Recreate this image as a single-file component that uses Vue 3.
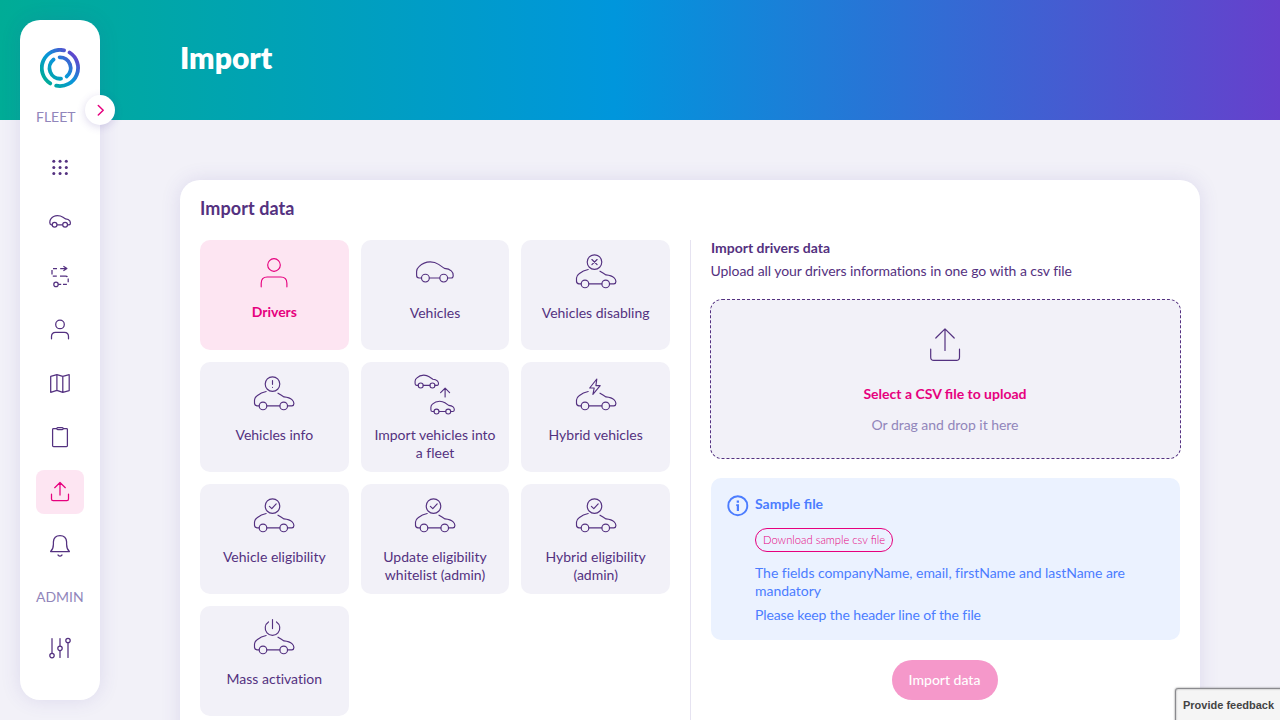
<script setup>
const nav = ['grid', 'car', 'route', 'user', 'map', 'clipboard', 'upload', 'bell']

const tiles = [
  { icon: 'user', label: 'Drivers', active: true },
  { icon: 'car', label: 'Vehicles' },
  { icon: 'disable', label: 'Vehicles disabling' },
  { icon: 'info', label: 'Vehicles info' },
  { icon: 'fleet', label: 'Import vehicles into a fleet' },
  { icon: 'hybrid', label: 'Hybrid vehicles' },
  { icon: 'check', label: 'Vehicle eligibility' },
  { icon: 'check', label: 'Update eligibility whitelist (admin)' },
  { icon: 'check', label: 'Hybrid eligibility (admin)' },
  { icon: 'power', label: 'Mass activation' },
]
</script>

<template>
  <div class="page">
    <svg class="defs" width="0" height="0">
      <symbol id="car" viewBox="0 0 48 48">
        <path d="M10.5 30H8Q5.6 29.8 5.6 27.2V23.4Q5.8 20.6 8 18.6Q12.8 13.9 19.2 13.9Q24 13.9 27.6 16.4L33.4 20.4Q38 20.8 40.3 22.9Q42.2 24.6 42.2 27.4Q42.2 29.9 40.3 30H36.6M18.4 30H28.7" />
        <circle cx="14.4" cy="30.1" r="3.9" /><circle cx="32.7" cy="30.1" r="3.9" />
      </symbol>
    </svg>

    <header class="banner"><h1>Import</h1></header>

    <aside class="sidebar">
      <svg class="logo" width="40" height="40" viewBox="0 0 40 40">
        <defs>
          <linearGradient id="brand" gradientUnits="userSpaceOnUse" x1="5" y1="34" x2="35" y2="6">
            <stop offset="0" stop-color="#00ac96" />
            <stop offset=".5" stop-color="#0896da" />
            <stop offset="1" stop-color="#6640cc" />
          </linearGradient>
        </defs>
        <g fill="none" stroke="url(#brand)" stroke-width="3.8" stroke-linecap="round">
          <path d="M10.2 35.4A18.2 18.2 0 0 1 24 2.3" />
          <path d="M29.6 4.5A18.2 18.2 0 0 1 16.2 37.7" />
          <path d="M13.6 11.6A10.7 10.7 0 0 0 21 30.7" />
          <path d="M19.6 9.3A10.7 10.7 0 0 1 26.6 28.4" />
        </g>
      </svg>
      <button class="toggle">
        <svg width="30" height="30" viewBox="0 0 30 30"><path d="M13.3 10.5L18.2 15.2L13.3 20" /></svg>
      </button>
      <span class="label">FLEET</span>
      <nav>
        <a v-for="n in nav" :key="n" class="item" :class="{ active: n === 'upload' }">
          <svg class="ico" width="24" height="24" viewBox="0 0 24 24">
            <g v-if="n === 'grid'" class="solid">
              <template v-for="y in 3" :key="y">
                <circle v-for="x in 3" :key="x" :cx="5.8 + (x - 1) * 6.25" :cy="5.3 + (y - 1) * 6.15" r="1.5" />
              </template>
            </g>
            <g v-else-if="n === 'car'">
              <path d="M3.8 14.8H3.3Q1.8 14.6 1.8 12.6Q1.8 10.2 2.8 9Q5.2 5.6 9.4 5.6Q12.6 5.6 15 7.2L17.6 8.9Q20.6 9.2 21.8 10.8Q22.6 12.4 22.3 14Q22 14.8 20.5 14.8H19.9M9.3 14.8H14.3" />
              <circle cx="6.6" cy="14.7" r="2.4" /><circle cx="17.1" cy="14.7" r="2.4" />
            </g>
            <g v-else-if="n === 'route'" class="dashes">
              <path d="M5 4.5H9M12.2 4.5H18.8M15.4 2.2L18.9 4.5L15.4 6.8M4 6V10.4M4.8 12.2H8.8M12 12.2H17.6Q19 12.2 19.4 13M20.2 14.6V18.2M18.9 20.4H15M13.2 20.4H10.2" />
              <circle cx="8" cy="20.4" r="2.2" />
            </g>
            <g v-else-if="n === 'user'">
              <circle cx="12" cy="6.4" r="4.3" />
              <path d="M3.5 20.8V18.6Q3.5 14.4 7.6 14.4H16.4Q20.5 14.4 20.5 18.6V20.8" />
            </g>
            <g v-else-if="n === 'map'">
              <path d="M2.7 4.4L8.9 2.6L14.8 4.4L21.2 2.6V18.6L14.8 20.4L8.9 18.4L2.7 20.4ZM8.9 2.6V18.4M14.8 4.4V20.4" />
            </g>
            <g v-else-if="n === 'clipboard'">
              <path d="M8.8 2.6H5.6Q4.6 2.6 4.6 3.4V19.8Q4.6 20.6 5.6 20.6H18.5Q19.4 20.6 19.4 19.8V3.4Q19.4 2.6 18.5 2.6H15.2M9.7 1.5H14.3Q15.2 1.5 15.2 2.5Q15.2 3.5 14.3 3.5H9.7Q8.8 3.5 8.8 2.5Q8.8 1.5 9.7 1.5Z" />
            </g>
            <g v-else-if="n === 'upload'">
              <path d="M12 15V2.8M6.7 7.7L12 2.5L17.3 7.7M3.5 14.2V18.9Q3.5 20.5 5.1 20.5H18.9Q20.5 20.5 20.5 18.9V14.2" />
            </g>
            <g v-else>
              <path d="M2.6 17.5Q5.4 15 5.4 10.2V7.9Q5.8 1.6 12 1.6Q18.2 1.6 18.6 7.9V10.2Q18.6 15 21.4 17.5ZM10 21Q12 23.1 14 21" />
            </g>
          </svg>
        </a>
      </nav>
      <span class="label admin">ADMIN</span>
      <a class="item last">
        <svg class="ico" width="24" height="24" viewBox="0 0 24 24">
          <path d="M4 2.6V17.2M12 2.6V10M12 14.6V21.4M20 6.8V21.4" />
          <circle cx="4" cy="19.6" r="2.2" /><circle cx="12" cy="12.3" r="2.2" /><circle cx="20" cy="4.5" r="2.2" />
        </svg>
      </a>
    </aside>

    <main class="card">
      <h2>Import data</h2>
      <div class="columns">
        <section class="tiles">
          <div v-for="t in tiles" :key="t.label" class="tile" :class="{ active: t.active }">
            <svg class="tico" width="48" height="48" viewBox="0 0 48 48">
              <g v-if="t.icon === 'user'">
                <circle cx="24" cy="17" r="6.3" />
                <path d="M11.2 38.8V35.2Q11.2 29 17.2 29H30.8Q36.9 29 36.9 35.2V38.8" />
              </g>
              <use v-else-if="t.icon === 'car'" href="#car" width="48" height="48" />
              <g v-else-if="t.icon === 'fleet'">
                <g class="mini" transform="translate(.5 -3.8) scale(.64)"><use href="#car" width="48" height="48" /></g>
                <g class="mini" transform="translate(16.3 22.3) scale(.64)"><use href="#car" width="48" height="48" /></g>
                <path d="M34.1 27V18.2M29.6 22.6L34.1 18.1L38.6 22.6" />
              </g>
              <g v-else>
                <path d="M9.1 35.9H7Q4.6 35.6 4.5 33.4V30Q4.7 27.4 7.1 25.7Q11.2 22.4 16.2 21.5M28 23.2Q31 25 34 26.9Q39.6 27.4 42.2 29.8Q43.9 31.4 43.9 33.6Q43.8 35.7 41.9 35.9H37.6M16.9 35.9H29.8" />
                <circle cx="13" cy="35.9" r="3.8" /><circle cx="33.7" cy="35.9" r="3.8" />
                <path v-if="t.icon === 'hybrid'" d="M24.8 9L17.7 18H22.2L20.9 24.4L28.2 15.6H23.9Z" />
                <path v-else-if="t.icon === 'power'" d="M22.5 5.6V14.6M18.5 7.9A7.3 7.3 0 1 0 26.5 7.9" />
                <circle v-else cx="22.5" cy="14.1" r="7.3" />
                <path v-if="t.icon === 'disable'" d="M19.9 11.5L25.1 16.7M25.1 11.5L19.9 16.7" />
                <path v-if="t.icon === 'check'" d="M19.4 14.3L21.8 16.6L26.2 11.8" />
                <path v-if="t.icon === 'info'" d="M22.5 10.6V14.3M22.5 17.2V17.3" />
              </g>
            </svg>
            <span>{{ t.label }}</span>
          </div>
        </section>

        <section class="detail">
          <h3>Import drivers data</h3>
          <p class="desc">Upload all your drivers informations in one go with a csv file</p>
          <div class="drop">
            <svg width="40" height="40" viewBox="0 0 40 40">
              <path d="M20 26.4V4.8M10.8 14L20 4.8L29.2 14M5.7 25.2V33.2Q5.7 36.4 8.9 36.4H31.3Q34.5 36.4 34.5 33.2V25.2" />
            </svg>
            <strong>Select a CSV file to upload</strong>
            <span>Or drag and drop it here</span>
          </div>
          <div class="sample">
            <svg width="22" height="22" viewBox="0 0 22 22">
              <circle cx="10.8" cy="10.7" r="9.5" />
              <path class="solid" d="M9.7 5.6h2.3v2.2h-2.3zM9.2 9.3h2.8v6.7h-2.2v-5h-.6z" />
            </svg>
            <div class="sample-body">
              <h4>Sample file</h4>
              <button class="download">Download sample csv file</button>
              <p>The fields companyName, email, firstName and lastName are mandatory</p>
              <p class="keep">Please keep the header line of the file</p>
            </div>
          </div>
          <button class="submit">Import data</button>
        </section>
      </div>
    </main>

    <button class="feedback">Provide feedback</button>
  </div>
</template>

<style>
html, body { margin: 0; overflow: hidden; background: #f2f1f8; }
</style>

<style scoped>
.page {
  position: relative;
  height: 720px;
  overflow: hidden;
  box-sizing: border-box;
  background: #f2f1f8;
  color: #543180;
  font-family: Lato, sans-serif;
  font-size: 14px;
  line-height: 18px;
}
.defs { position: absolute; }
h1, h2, h3, h4, p { margin: 0; }
button { font-family: inherit; padding: 0; border: 0; box-sizing: border-box; }
svg { fill: none; stroke: currentColor; stroke-width: 1.25; stroke-linecap: round; stroke-linejoin: round; flex: none; display: block; }
.solid { fill: currentColor; stroke: none; }
.dashes { stroke-linecap: butt; }

.banner {
  height: 120px;
  box-sizing: border-box;
  padding: 37px 0 0 180px;
  background: linear-gradient(90deg, #00ac96, #0096dc 48%, #6640cc);
}
h1 { color: #fff; font-size: 30px; line-height: 40px; font-weight: 800; }

.sidebar {
  position: absolute;
  left: 20px;
  top: 20px;
  width: 80px;
  height: 680px;
  box-sizing: border-box;
  padding: 28px 16px 0;
  display: flex;
  flex-direction: column;
  align-items: flex-start;
  background: #fff;
  border-radius: 20px;
  box-shadow: 0 0 20px rgba(80, 60, 160, .13);
}
.logo { align-self: center; }
.toggle {
  position: absolute;
  left: 65px;
  top: 75px;
  width: 30px;
  height: 30px;
  border-radius: 50%;
  background: #fff;
  color: #e6007e;
  box-shadow: 0 2px 8px rgba(80, 60, 160, .2);
}
.toggle svg { stroke-width: 1.5; }
.label { margin-top: 20px; color: #9186bb; line-height: 18px; white-space: nowrap; }
nav { display: flex; flex-direction: column; gap: 10px; margin-top: 20px; }
.item { width: 48px; height: 44px; border-radius: 8px; display: flex; align-items: center; justify-content: center; }
.item.active { background: #fde5f2; color: #e6007e; }
.admin { margin-top: 20px; }
.last { margin-top: 20px; }

.card {
  margin: 60px 80px 0 180px;
  height: 700px;
  box-sizing: border-box;
  padding: 17px 20px 0;
  background: #fff;
  border-radius: 20px;
  box-shadow: 0 0 20px rgba(80, 60, 160, .13);
}
h2 { font-size: 18px; line-height: 22px; font-weight: 700; letter-spacing: .08px; }
.columns { display: flex; margin-top: 21px; }
.tiles {
  width: 470px;
  flex: none;
  display: grid;
  grid-template-columns: repeat(3, 1fr);
  grid-auto-rows: 110px;
  gap: 12px;
  align-content: start;
}
.tile {
  display: flex;
  flex-direction: column;
  align-items: center;
  box-sizing: border-box;
  padding: 8px 10px 0;
  border-radius: 10px;
  background: #f2f1f8;
  text-align: center;
}
.tico { stroke-width: 1.15; }
.mini { stroke-width: 1.75; }
.tile span { margin-top: 8px; font-variant-ligatures: none; }
.tile.active { background: #fde5f2; color: #e6007e; font-weight: 700; }
.tile.active span { margin-top: 7px; }
.detail {
  flex: 1;
  margin-left: 20px;
  padding-left: 20px;
  border-left: 1px solid #e6e3f1;
  height: 520px;
  display: flex;
  flex-direction: column;
}
h3 { font-size: 14px; line-height: 16px; font-weight: 700; }
.desc { margin-top: 6px; margin-left: -.5px; letter-spacing: -.06px; }
.drop {
  margin: 19px -1px 0;
  height: 160px;
  box-sizing: border-box;
  border: 1px dashed #543180;
  border-radius: 12px;
  background: #f2f1f8;
  display: flex;
  flex-direction: column;
  align-items: center;
  padding: 24px 1px 0 0;
}
.drop svg { stroke-width: 1.2; }
.drop strong { margin-top: 21px; color: #e6007e; }
.drop span { margin-top: 13px; color: #9186bb; letter-spacing: -.03px; }
.sample {
  margin-top: 19px;
  height: 162px;
  box-sizing: border-box;
  padding: 17px 16px 0;
  display: flex;
  gap: 6px;
  border-radius: 10px;
  background: #ebf2ff;
  color: #4c7dff;
}
.sample > svg { stroke-width: 1.9; }
.sample-body { flex: 1; }
h4 { font-size: 14px; line-height: 18px; font-weight: 700; }
.download {
  display: block;
  margin: 15px 0 12px;
  width: 138px;
  height: 24px;
  border: 1px solid #e6007e;
  border-radius: 12px;
  background: transparent;
  color: #e6007e;
  font-size: 11.2px;
  font-weight: 300;
  line-height: 22px;
  white-space: nowrap;
}
.sample p { letter-spacing: -.04px; }
.sample .keep { margin-top: 6px; letter-spacing: -.1px; }
.submit {
  align-self: center;
  margin: 20px 2px 0 0;
  width: 106px;
  height: 40px;
  flex: none;
  padding-bottom: 2px;
  border-radius: 20px;
  background: #f598ca;
  color: #fff;
  font-size: 14px;
  font-weight: 500;
}
.feedback {
  position: absolute;
  left: 1175px;
  top: 688px;
  width: 110px;
  height: 36px;
  padding: 0 0 2px 7px;
  border: 1px solid #8a8a8e;
  border-radius: 3px 0 0 0;
  box-shadow: 0 0 2px #777, inset 0 0 2px #999;
  background: #f5f5f5;
  color: #444;
  font: 700 11px/16px "Liberation Sans", Arial, sans-serif;
  text-align: left;
  white-space: nowrap;
}
</style>
